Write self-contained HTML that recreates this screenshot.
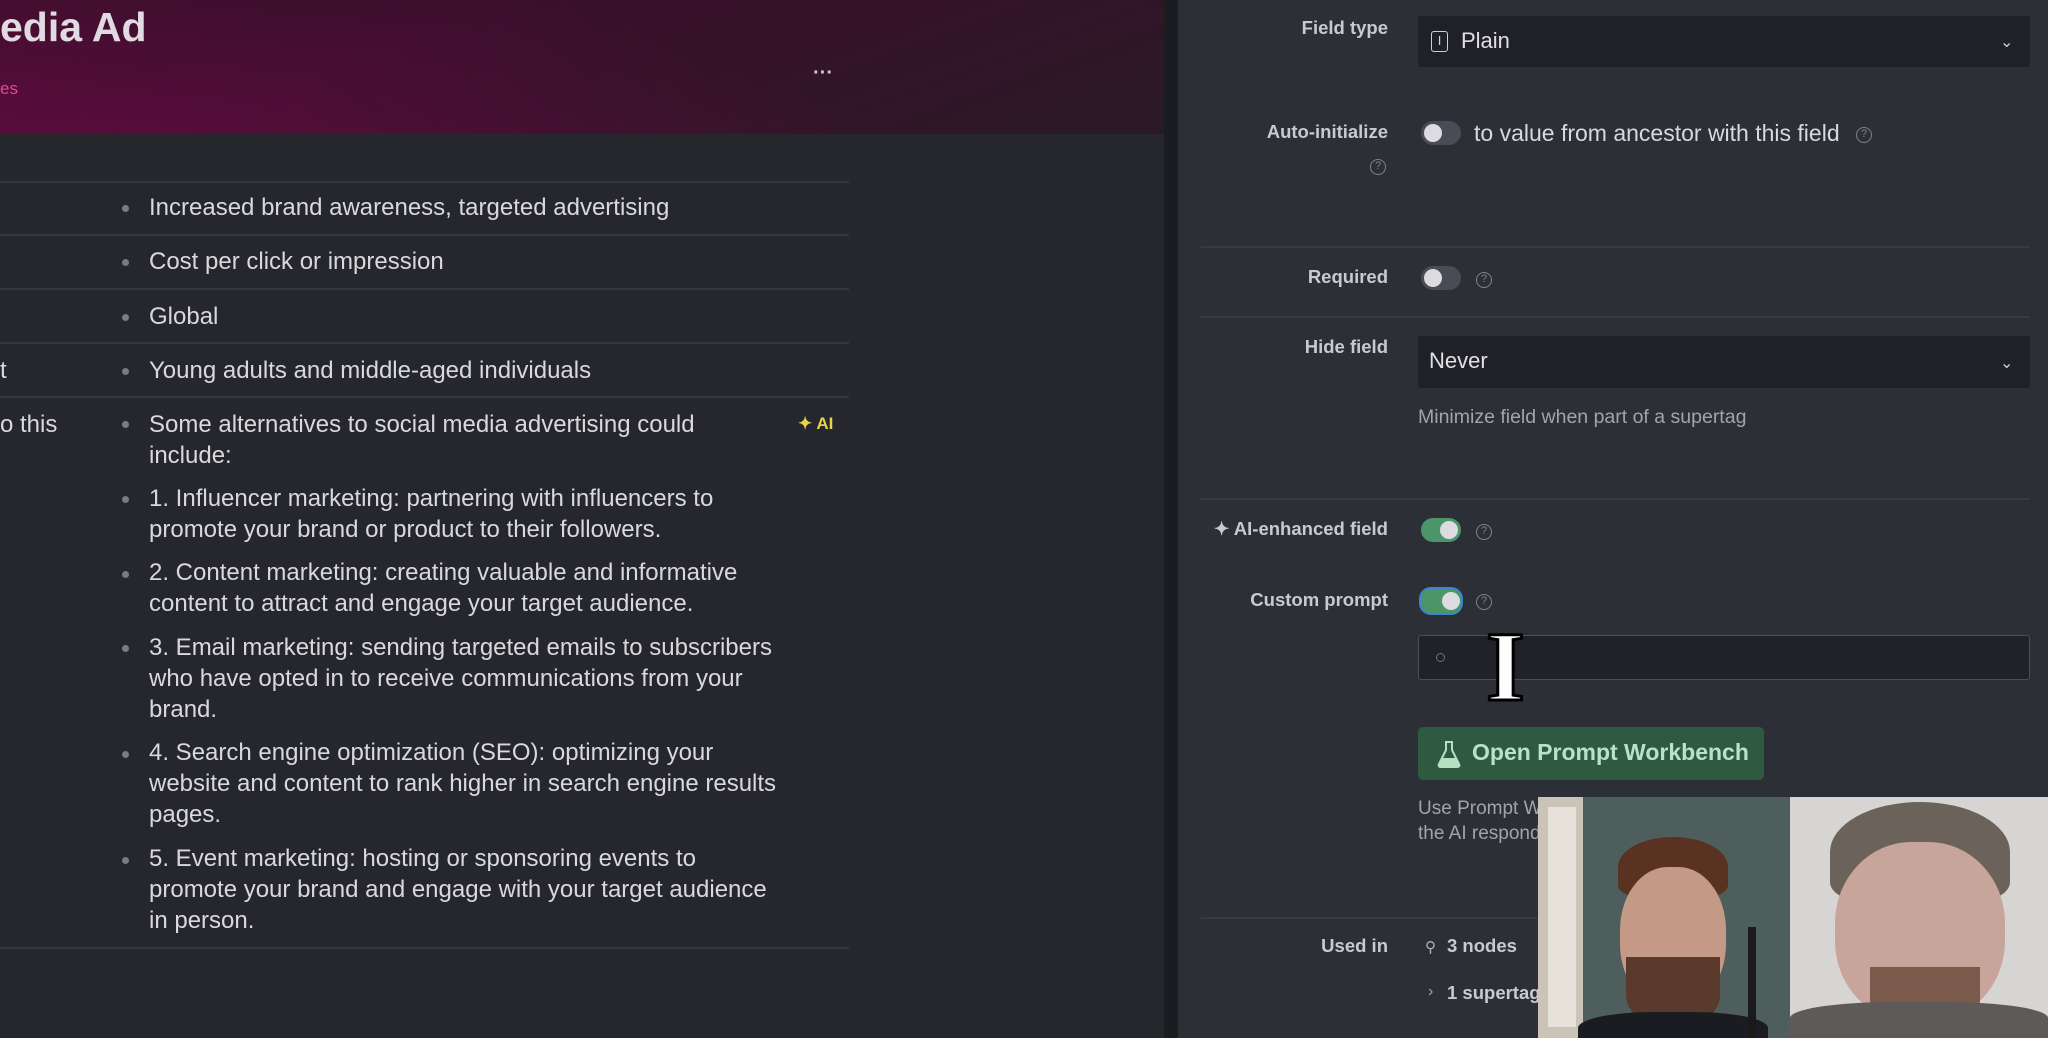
<!DOCTYPE html>
<html><head><meta charset="utf-8"><style>
*{margin:0;padding:0;box-sizing:border-box}
body{width:2048px;height:1038px;overflow:hidden;background:#26282e;font-family:"Liberation Sans",sans-serif;position:relative}
.a{position:absolute;white-space:nowrap}
#left{position:absolute;left:0;top:0;width:1164px;height:1038px;background:#25272d}
#hdr{position:absolute;left:0;top:0;width:1164px;height:134px;background:linear-gradient(160deg,#2a0f22 0%,#3a0f2c 35%,#321428 70%,#2a1a26 100%)}
#hdr:after{content:"";position:absolute;left:0;top:0;right:0;bottom:0;background:linear-gradient(20deg,rgba(120,10,75,.55),rgba(0,0,0,0) 60%)}
#div{position:absolute;left:1164px;top:0;width:14px;height:1038px;background:#1b1c20}
#right{position:absolute;left:1178px;top:0;width:870px;height:1038px;background:#2d2f37}
.ln{position:absolute;height:2px;background:#34363d}
.rl{position:absolute;height:2px;background:#383a42;left:1201px;width:829px}
.t{color:#d9d9dd;font-size:24px}
.b{position:absolute;width:7px;height:7px;border-radius:50%;background:#7a7c84}
.lab{position:absolute;right:660px;color:#c9c9ce;font-size:18.5px;font-weight:bold;white-space:nowrap}
.sel{position:absolute;left:1418px;width:612px;background:#1f2126;border-radius:3px}
.tg{position:absolute;width:40px;height:24px;border-radius:12px;background:#4a4c55}
.tg i{position:absolute;top:3px;left:3px;width:18px;height:18px;border-radius:50%;background:#dcdce0}
.tg.on{background:#4a9668}.tg.on i{left:19px}
.q{position:absolute;width:16px;height:16px;border:1.5px solid #80828a;border-radius:50%;color:#80828a;font-size:11px;text-align:center;line-height:13px}
</style></head><body>
<div id="left"></div>
<div id="hdr"></div>
<div class="a" style="left:0;top:4px;font-size:41px;font-weight:bold;color:#e2dae2">edia Ad</div>
<div class="a" style="left:0;top:79px;font-size:17px;color:#e0489c">es</div>
<div class="a" style="left:813px;top:62px;font-size:20px;color:#cfc8d0;font-weight:bold">···</div>

<div class="ln" style="left:0;top:181px;width:849px"></div>
<div class="ln" style="left:0;top:234px;width:849px"></div>
<div class="ln" style="left:0;top:288px;width:849px"></div>
<div class="ln" style="left:0;top:342px;width:849px"></div>
<div class="ln" style="left:0;top:396px;width:849px"></div>
<div class="ln" style="left:0;top:947px;width:849px"></div>

<div class="b" style="left:122px;top:205px"></div><div class="a t" style="left:149px;top:194px">Increased brand awareness, targeted advertising</div>
<div class="b" style="left:122px;top:259px"></div><div class="a t" style="left:149px;top:248px">Cost per click or impression</div>
<div class="b" style="left:122px;top:314px"></div><div class="a t" style="left:149px;top:303px">Global</div>
<div class="a t" style="left:0;top:357px">t</div>
<div class="b" style="left:122px;top:368px"></div><div class="a t" style="left:149px;top:357px">Young adults and middle-aged individuals</div>
<div class="a t" style="left:0;top:411px">o this</div>
<div class="a" style="left:798px;top:414px;color:#e8d24a;font-size:17px;font-weight:bold">✦ AI</div>
<div class="b" style="left:122px;top:421px"></div><div class="a t" style="left:149px;top:409px;line-height:31px">Some alternatives to social media advertising could<br>include:</div>
<div class="b" style="left:122px;top:496px"></div><div class="a t" style="left:149px;top:483px;line-height:31px">1. Influencer marketing: partnering with influencers to<br>promote your brand or product to their followers.</div>
<div class="b" style="left:122px;top:571px"></div><div class="a t" style="left:149px;top:557px;line-height:31px">2. Content marketing: creating valuable and informative<br>content to attract and engage your target audience.</div>
<div class="b" style="left:122px;top:645px"></div><div class="a t" style="left:149px;top:632px;line-height:31px">3. Email marketing: sending targeted emails to subscribers<br>who have opted in to receive communications from your<br>brand.</div>
<div class="b" style="left:122px;top:751px"></div><div class="a t" style="left:149px;top:737px;line-height:31px">4. Search engine optimization (SEO): optimizing your<br>website and content to rank higher in search engine results<br>pages.</div>
<div class="b" style="left:122px;top:857px"></div><div class="a t" style="left:149px;top:843px;line-height:31px">5. Event marketing: hosting or sponsoring events to<br>promote your brand and engage with your target audience<br>in person.</div>

<div id="div"></div>
<div id="right"></div>

<div class="lab" style="top:17px">Field type</div>
<div class="sel" style="top:16px;height:51px"></div>
<div class="a" style="left:1431px;top:31px;width:17px;height:21px;border:1.5px solid #d0d0d4;border-radius:3px;color:#d0d0d4;font-size:13px;text-align:center;line-height:18px">I</div>
<div class="a" style="left:1461px;top:28px;color:#e0e0e4;font-size:22px">Plain</div>
<div class="a" style="left:2000px;top:32px;color:#d0d0d4;font-size:16px">⌄</div>

<div class="lab" style="top:121px">Auto-initialize</div>
<div class="q" style="left:1370px;top:159px">?</div>
<div class="tg" style="left:1421px;top:121px"><i></i></div>
<div class="a" style="left:1474px;top:120px;color:#d9d9dd;font-size:23px">to value from ancestor with this field</div>
<div class="q" style="left:1856px;top:127px">?</div>
<div class="rl" style="top:246px"></div>

<div class="lab" style="top:266px">Required</div>
<div class="tg" style="left:1421px;top:266px"><i></i></div>
<div class="q" style="left:1476px;top:272px">?</div>
<div class="rl" style="top:316px"></div>

<div class="lab" style="top:336px">Hide field</div>
<div class="sel" style="top:336px;height:52px"></div>
<div class="a" style="left:1429px;top:348px;color:#e0e0e4;font-size:22px">Never</div>
<div class="a" style="left:2000px;top:353px;color:#d0d0d4;font-size:16px">⌄</div>
<div class="a" style="left:1418px;top:406px;color:#a2a4ac;font-size:19.5px">Minimize field when part of a supertag</div>
<div class="rl" style="top:498px"></div>

<div class="lab" style="top:518px">✦ AI-enhanced field</div>
<div class="tg on" style="left:1421px;top:518px"><i></i></div>
<div class="q" style="left:1476px;top:524px">?</div>

<div class="lab" style="top:589px">Custom prompt</div>
<div class="tg on" style="left:1419px;top:587px;width:44px;height:28px;border:2px solid #3a86d0"><i style="top:3px;left:21px"></i></div>
<div class="q" style="left:1476px;top:594px">?</div>
<div class="a" style="left:1418px;top:635px;width:612px;height:45px;background:#202227;border:1.5px solid #4c4e56;border-radius:3px"></div>
<div class="a" style="left:1436px;top:653px;width:9px;height:9px;border:1px solid #70727a;border-radius:50%"></div>
<div class="a" style="left:1486px;top:612px;font-size:100px;color:#fff;font-family:'Liberation Serif',serif;font-weight:bold;-webkit-text-stroke:3px #000;line-height:110px">I</div>

<div class="a" style="left:1418px;top:727px;width:346px;height:53px;background:#2f5a42;border-radius:5px"></div>
<svg class="a" style="left:1436px;top:740px" width="26" height="28" viewBox="0 0 26 28"><path d="M9 2h8M10 2v8L3 24c-1 2 0 3 2 3h16c2 0 3-1 2-3L16 10V2" fill="none" stroke="#b6e0c2" stroke-width="2"/><path d="M6 18h14l3 6c0 2-1 3-2 3H5c-1 0-2-1-2-3z" fill="#b6e0c2"/></svg>
<div class="a" style="left:1472px;top:739px;color:#b9e2c6;font-size:23px;font-weight:bold">Open Prompt Workbench</div>

<div class="a" style="left:1418px;top:796px;color:#a2a4ac;font-size:19px;line-height:25px">Use Prompt W<br>the AI respond</div>
<div class="rl" style="top:917px"></div>
<div class="lab" style="top:935px">Used in</div>
<div class="a" style="left:1425px;top:938px;color:#b0b2b8;font-size:15px">⚲</div>
<div class="a" style="left:1447px;top:935px;color:#c9c9ce;font-size:18.5px;font-weight:bold">3 nodes</div>
<div class="a" style="left:1428px;top:983px;color:#a0a2a8;font-size:16px">›</div>
<div class="a" style="left:1447px;top:982px;color:#c9c9ce;font-size:18.5px;font-weight:bold">1 supertag</div>

<div class="a" style="left:1538px;top:797px;width:252px;height:241px;background:#4d5e5c;overflow:hidden">
 <div class="a" style="left:0;top:0;width:45px;height:241px;background:#c9c3b8"></div>
 <div class="a" style="left:10px;top:10px;width:28px;height:220px;background:#e6e2da"></div>
 <div class="a" style="left:80px;top:40px;width:110px;height:60px;border-radius:50% 50% 20% 20%;background:#5a3222"></div>
 <div class="a" style="left:82px;top:70px;width:106px;height:140px;border-radius:45%;background:#c49a86"></div>
 <div class="a" style="left:88px;top:160px;width:94px;height:70px;border-radius:0 0 45% 45%;background:#5a3a2c"></div>
 <div class="a" style="left:40px;top:215px;width:190px;height:40px;border-radius:40% 40% 0 0;background:#1a1c22"></div>
 <div class="a" style="left:210px;top:130px;width:8px;height:111px;background:#1a1a1a"></div>
</div>
<div class="a" style="left:1790px;top:797px;width:258px;height:241px;background:#d6d5d3;overflow:hidden">
 <div class="a" style="left:40px;top:5px;width:180px;height:100px;border-radius:50% 50% 20% 20%;background:#6b625a"></div>
 <div class="a" style="left:45px;top:45px;width:170px;height:180px;border-radius:45%;background:#c8a59a"></div>
 <div class="a" style="left:80px;top:170px;width:110px;height:60px;border-radius:0 0 45% 45%;background:#7a5a4a"></div>
 <div class="a" style="left:0;top:205px;width:258px;height:40px;border-radius:40% 40% 0 0;background:#5e5a58"></div>
</div>
</body></html>
